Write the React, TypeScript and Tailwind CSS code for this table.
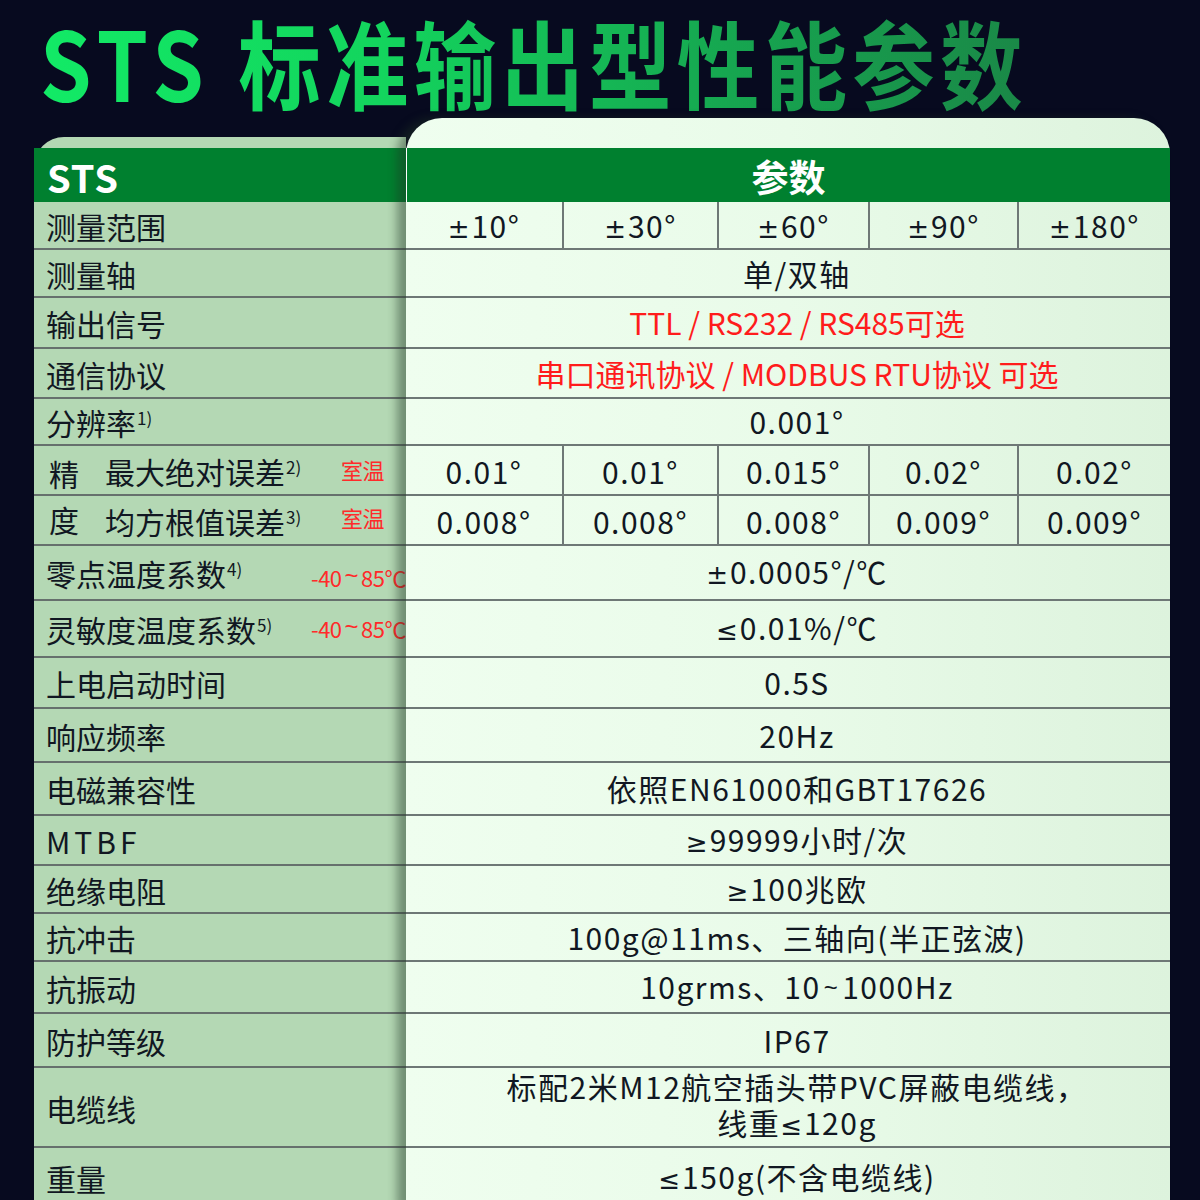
import React from "react";

type Row = {
  h: number;
  label: React.ReactNode;
  note?: React.ReactNode;
  noteCls?: string;
  value?: React.ReactNode;
  cells?: React.ReactNode[];
  red?: boolean;
};

const Sup = ({ n }: { n: string }) => (
  <span className="relative -top-[10px] text-[17px] ml-[1px]">{n}</span>
);

// symbols rendered in a Latin font so they match the reference glyph shapes
const S = ({ c }: { c: string }) => (
  <span className="font-['DejaVu_Sans',sans-serif] text-[26px] tracking-[2px]">{c}</span>
);
const T = () => (
  <span className="font-['Liberation_Sans',sans-serif] text-[24px] mx-[3px] relative -top-[3px]">~</span>
);

const rows: Row[] = [
  {
    h: 48,
    label: "测量范围",
    cells: [
      <><S c="±" />10°</>,
      <><S c="±" />30°</>,
      <><S c="±" />60°</>,
      <><S c="±" />90°</>,
      <><S c="±" />180°</>,
    ],
  },
  { h: 48, label: "测量轴", value: "单/双轴" },
  { h: 51, label: "输出信号", value: "TTL / RS232 / RS485可选", red: true },
  { h: 50, label: "通信协议", value: "串口通讯协议 / MODBUS RTU协议 可选", red: true },
  { h: 47, label: <>分辨率<Sup n="1)" /></>, value: "0.001°" },
  {
    h: 50,
    label: <><span className="ml-[3px] mr-[26px] relative top-[2px]">精</span>最大绝对误差<Sup n="2)" /></>,
    note: "室温",
    noteCls: "pr-[22px] self-center pb-[2px]",
    cells: ["0.01°", "0.01°", "0.015°", "0.02°", "0.02°"],
  },
  {
    h: 50,
    label: <><span className="ml-[3px] mr-[26px] relative -top-[2px]">度</span>均方根值误差<Sup n="3)" /></>,
    note: "室温",
    noteCls: "pr-[22px] self-center pb-[6px]",
    cells: ["0.008°", "0.008°", "0.008°", "0.009°", "0.009°"],
  },
  {
    h: 55,
    label: <>零点温度系数<Sup n="4)" /></>,
    note: <>-40<T />85℃</>,
    noteCls: "pr-0 self-center pt-[12px]",
    value: <><S c="±" />0.0005°/℃</>,
  },
  {
    h: 57,
    label: <>灵敏度温度系数<Sup n="5)" /></>,
    note: <>-40<T />85℃</>,
    noteCls: "pr-0 self-center pt-[2px]",
    value: <><S c="≤" />0.01%/℃</>,
  },
  { h: 51, label: "上电启动时间", value: "0.5S" },
  { h: 54, label: "响应频率", value: "20Hz" },
  { h: 53, label: "电磁兼容性", value: "依照EN61000和GBT17626" },
  { h: 50, label: <span className="tracking-[4px]">MTBF</span>, value: <><S c="≥" />99999小时/次</> },
  { h: 48, label: "绝缘电阻", value: <><S c="≥" />100兆欧</> },
  { h: 48, label: "抗冲击", value: "100g@11ms、三轴向(半正弦波)" },
  { h: 52, label: "抗振动", value: <>10grms、10<T />1000Hz</> },
  { h: 54, label: "防护等级", value: "IP67" },
  {
    h: 80,
    label: "电缆线",
    value: (
      <div className="flex flex-col items-center leading-[36px] pb-[2px]">
        <span>标配2米M12航空插头带PVC屏蔽电缆线，</span>
        <span>线重<S c="≤" />120g</span>
      </div>
    ),
  },
  { h: 60, label: "重量", value: <><S c="≤" />150g(不含电缆线)</> },
];

const colW = ["w-[158px]", "w-[155px]", "w-[151px]", "w-[149px]", "w-[151px]"];

export default function App() {
  return (
    <div className="w-[1200px] h-[1200px] overflow-hidden bg-[#070a1f] font-['Noto_Sans_CJK_SC',sans-serif] text-[#111722]">
      {/* Title */}
      <div className="h-[118px] pl-[40px] pt-[5px] flex items-start">
        <div className="origin-left scale-x-[0.86] whitespace-nowrap font-bold text-[96px] leading-[112px] bg-[linear-gradient(90deg,#12ea66_0%,#13d45d_35%,#16a650_70%,#1a8847_100%)] bg-clip-text text-transparent">
          <span className="tracking-[8px]">STS</span>
          <span className="inline-block w-[32px]" />
          <span className="tracking-[6px]">标准输出型性能参数</span>
        </div>
      </div>

      {/* Table */}
      <div className="flex items-start pl-[34px]">
        {/* Left panel */}
        <div className="w-[372px] mt-[19px] bg-[#b4d8b4] rounded-tl-[30px] flex flex-col shrink-0">
          <div className="h-[11px]" />
          <div className="h-[54px] bg-[#00802f] flex items-center pl-[13px] pt-[4px]">
            <span className="text-white font-bold text-[38px] tracking-[1px] leading-none">STS</span>
          </div>
          {rows.map((r, i) => (
            <div
              key={i}
              style={{ height: r.h }}
              className="border-b-2 border-[#66706d] flex items-center pl-[12px] text-[30px] leading-none whitespace-nowrap"
            >
              <span className="pt-[1px]">{r.label}</span>
              {r.note && (
                <span className={`ml-auto text-[22px] text-[#ff2a2a] tracking-[-0.5px] ${r.noteCls}`}>
                  {r.note}
                </span>
              )}
            </div>
          ))}
        </div>

        {/* Right panel */}
        <div className="w-[764px] shrink-0 relative z-10 rounded-t-[36px] bg-[linear-gradient(90deg,#effeef_0%,#e9fbe9_50%,#ddf3dd_100%)] shadow-[-9px_0_10px_rgba(30,50,35,0.45)] flex flex-col">
          <div className="h-[30px]" />
          <div className="h-[54px] bg-[#00802f] border-l border-white flex items-center justify-center pt-[2px]">
            <span className="text-white font-bold text-[37px] leading-none">参数</span>
          </div>
          {rows.map((r, i) => (
            <div
              key={i}
              style={{ height: r.h }}
              className="border-b-2 border-[#6e7876] flex text-[30px] leading-none whitespace-nowrap"
            >
              {r.cells ? (
                r.cells.map((c, j) => (
                  <div
                    key={j}
                    className={`${colW[j]} flex items-center justify-center tracking-[1.5px] ${
                      j < 4 ? "border-r-2 border-[#6e7876]" : ""
                    }`}
                  >
                    <span className="pt-[1px]">{c}</span>
                  </div>
                ))
              ) : (
                <div
                  className={`flex-1 flex items-center justify-center pl-[18px] ${
                    r.red ? "text-[#ff1c1c]" : "tracking-[1.5px]"
                  }`}
                >
                  <span className="pb-[1px]">{r.value}</span>
                </div>
              )}
            </div>
          ))}
        </div>
      </div>
    </div>
  );
}
